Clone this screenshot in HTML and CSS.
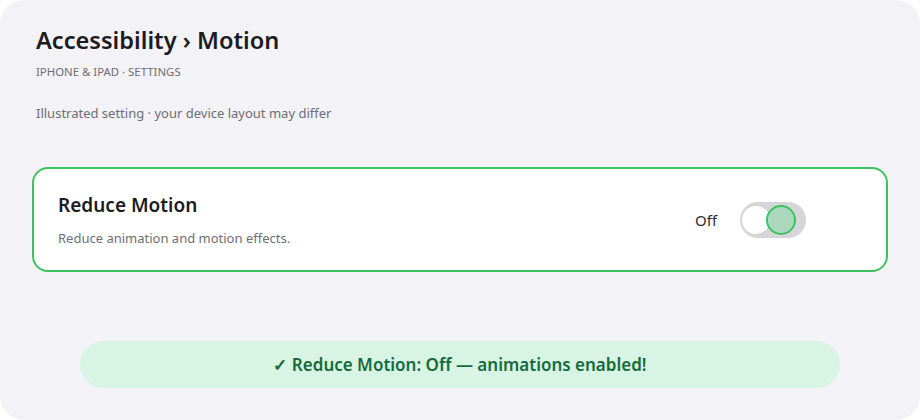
FILE: index.html
```html
<!DOCTYPE html>
<html>
<head>
<meta charset="utf-8">
<link rel="stylesheet" href="styles.css">
</head>
<body>
<div class="screen">
  <header class="head">
    <h1 class="title">Accessibility › Motion</h1>
    <div class="crumb">IPHONE &amp; IPAD · SETTINGS</div>
    <p class="note">Illustrated setting · your device layout may differ</p>
  </header>
  <section class="card">
    <div class="card-text">
      <div class="card-title">Reduce Motion</div>
      <div class="card-desc">Reduce animation and motion effects.</div>
    </div>
    <div class="control">
      <span class="state">Off</span>
      <span class="toggle"><span class="knob"></span><span class="ring"></span></span>
    </div>
  </section>
  <div class="banner">✓ Reduce Motion: Off — animations enabled!</div>
</div>
</body>
</html>
```

FILE: styles.css
```css
* { box-sizing: border-box; }
html, body { margin: 0; padding: 0; background: #ffffff; }
body { width: 920px; height: 420px; font-family: "Noto Sans", "Open Sans", sans-serif; }
.screen {
  width: 920px; height: 420px;
  background: #f2f2f7;
  border-radius: 24px;
  padding: 24px 32px 0 32px;
  display: flex; flex-direction: column;
}
.head { padding-left: 4px; }
.title { margin: 0; font-size: 23.6px; font-weight: 600; color: #1c1c1e; line-height: 32px; }
.crumb { margin-top: 8px; font-size: 11.4px; color: #6e6e73; letter-spacing: 0; line-height: 16px; }
.note { margin: 24px 0 0; font-size: 13px; color: #6e6e73; line-height: 18px; }
.card {
  margin-top: 45px;
  height: 105px;
  background: #fff;
  border: 2px solid #3cc35d;
  border-radius: 16px;
  display: flex; align-items: center; justify-content: space-between;
  padding: 0 80px 0 24px;
}
.card-title { font-size: 19px; font-weight: 600; color: #1c1c1e; line-height: 26px; }
.card-desc { margin-top: 11px; font-size: 13px; color: #6e6e73; line-height: 18px; }
.control { display: flex; align-items: center; gap: 23px; }
.state { font-size: 15px; color: #2c2c2e; }
.toggle {
  position: relative; display: block;
  width: 66px; height: 36px; border-radius: 18px;
  background: #d6d6da;
}
.knob {
  position: absolute; left: 2px; top: 4px;
  width: 28px; height: 28px; border-radius: 50%; background: #fff;
}
.ring {
  position: absolute; left: 26px; top: 3px;
  width: 30px; height: 30px; border-radius: 50%;
  background: rgba(160, 215, 180, 0.8);
  border: 2px solid #3cc35d;
}
.banner {
  margin: 69px 48px 0;
  height: 47px; border-radius: 24px;
  background: #d8f4e4;
  color: #166b3c;
  font-size: 17px; font-weight: 600;
  display: flex; align-items: center; justify-content: center;
}
```
